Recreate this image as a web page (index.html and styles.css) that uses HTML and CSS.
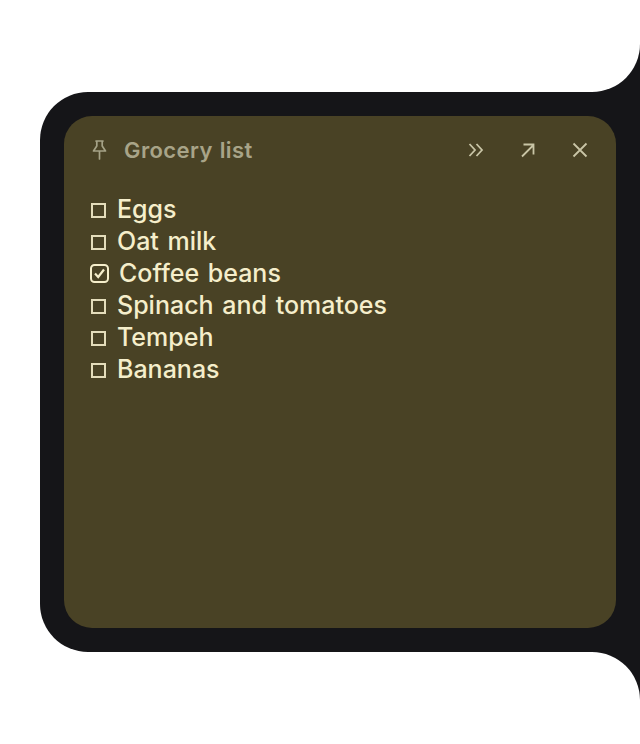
FILE: index.html
```html
<!DOCTYPE html>
<html lang="en">
<head>
<meta charset="utf-8">
<title>Grocery list</title>
<link rel="stylesheet" href="styles.css">
</head>
<body>
<div class="shell">
  <div class="cap cap-top"></div>
  <div class="middle">
    <div class="panel">
      <section class="note">
        <header class="note-head">
          <svg class="pin" viewBox="0 0 17 22" width="17" height="22" fill="none" stroke="currentColor" stroke-width="1.700" stroke-linejoin="round" stroke-linecap="round"><path d="M5 2h7M5.800 2v5L2.500 12h12L11.200 7V2M8.500 12v8"/></svg>
          <h1 class="note-title">Grocery list</h1>
          <div class="actions">
            <svg class="action" viewBox="0 0 16 16" width="16" height="16" fill="none" stroke="currentColor" stroke-width="1.800"><path d="M1.500 2L7 8l-5.500 6M8.500 2L14 8l-5.500 6"/></svg>
            <svg class="action" viewBox="0 0 16 16" width="16" height="16" fill="none" stroke="currentColor" stroke-width="1.800"><path d="M2 14.500L13.500 3M3.500 2.500h10V12.500"/></svg>
            <svg class="action" viewBox="0 0 16 16" width="16" height="16" fill="none" stroke="currentColor" stroke-width="1.800"><path d="M1.500 1.500l13 13M14.500 1.500l-13 13"/></svg>
          </div>
        </header>
        <ul class="list">
          <li class="item"><span class="box"></span>Eggs</li>
          <li class="item"><span class="box"></span>Oat milk</li>
          <li class="item"><svg class="check" viewBox="0 0 19 19" width="19" height="19" fill="none" stroke="currentColor"><rect x="1" y="1" width="17" height="17" rx="3.500" stroke-width="2"/><path d="M5 9.500l3.200 3.500L14 5.500" stroke-width="2.200"/></svg>Coffee beans</li>
          <li class="item"><span class="box"></span>Spinach and tomatoes</li>
          <li class="item"><span class="box"></span>Tempeh</li>
          <li class="item"><span class="box"></span>Bananas</li>
        </ul>
      </section>
    </div>
  </div>
  <div class="cap cap-bottom"></div>
</div>
</body>
</html>
```
FILE: styles.css
```css
html, body {
  margin: 0;
  padding: 0;
  background: #ffffff;
}
.shell {
  width: 640px;
  height: 744px;
  display: flex;
  flex-direction: column;
  background: #151518;
  font-family: Inter, "Liberation Sans", sans-serif;
  overflow: hidden;
}
.cap {
  height: 92px;
  flex: none;
  background: #ffffff;
}
.cap-top { border-bottom-right-radius: 48px; }
.cap-bottom { border-top-right-radius: 48px; }
.middle {
  flex: 1;
  display: flex;
  background: #ffffff;
  padding-left: 40px;
}
.panel {
  flex: 1;
  display: flex;
  background: #151518;
  border-radius: 48px 0 0 48px;
  padding: 24px;
}
.note {
  flex: 1;
  background: #494225;
  border-radius: 28px;
  padding: 0 28px 0 27px;
  color: #f5eecb;
}
.note-head {
  display: flex;
  align-items: center;
  height: 68px;
}
.pin {
  color: #a5a287;
  flex: none;
  margin-right: 16px;
}
.note-title {
  margin: 0;
  flex: 1;
  font-size: 22px;
  font-weight: 600;
  letter-spacing: 0.400px;
  word-spacing: 1px;
  color: #a8a488;
}
.actions {
  display: flex;
  gap: 36px;
  align-items: center;
  color: #c9c5a6;
}
.action { flex: none; }
.list {
  list-style: none;
  margin: 9px 0 0;
  padding: 0;
  font-size: 25px;
  font-weight: 500;
  line-height: 32px;
  word-spacing: 2px;
}
.item {
  display: flex;
  align-items: center;
}
.box {
  box-sizing: border-box;
  width: 15px;
  height: 15px;
  border: 2px solid #e4ddbb;
  margin: 2px 11px 0 0;
  flex: none;
}
.check {
  flex: none;
  margin: 1px 10px 0 -1px;
}
```
